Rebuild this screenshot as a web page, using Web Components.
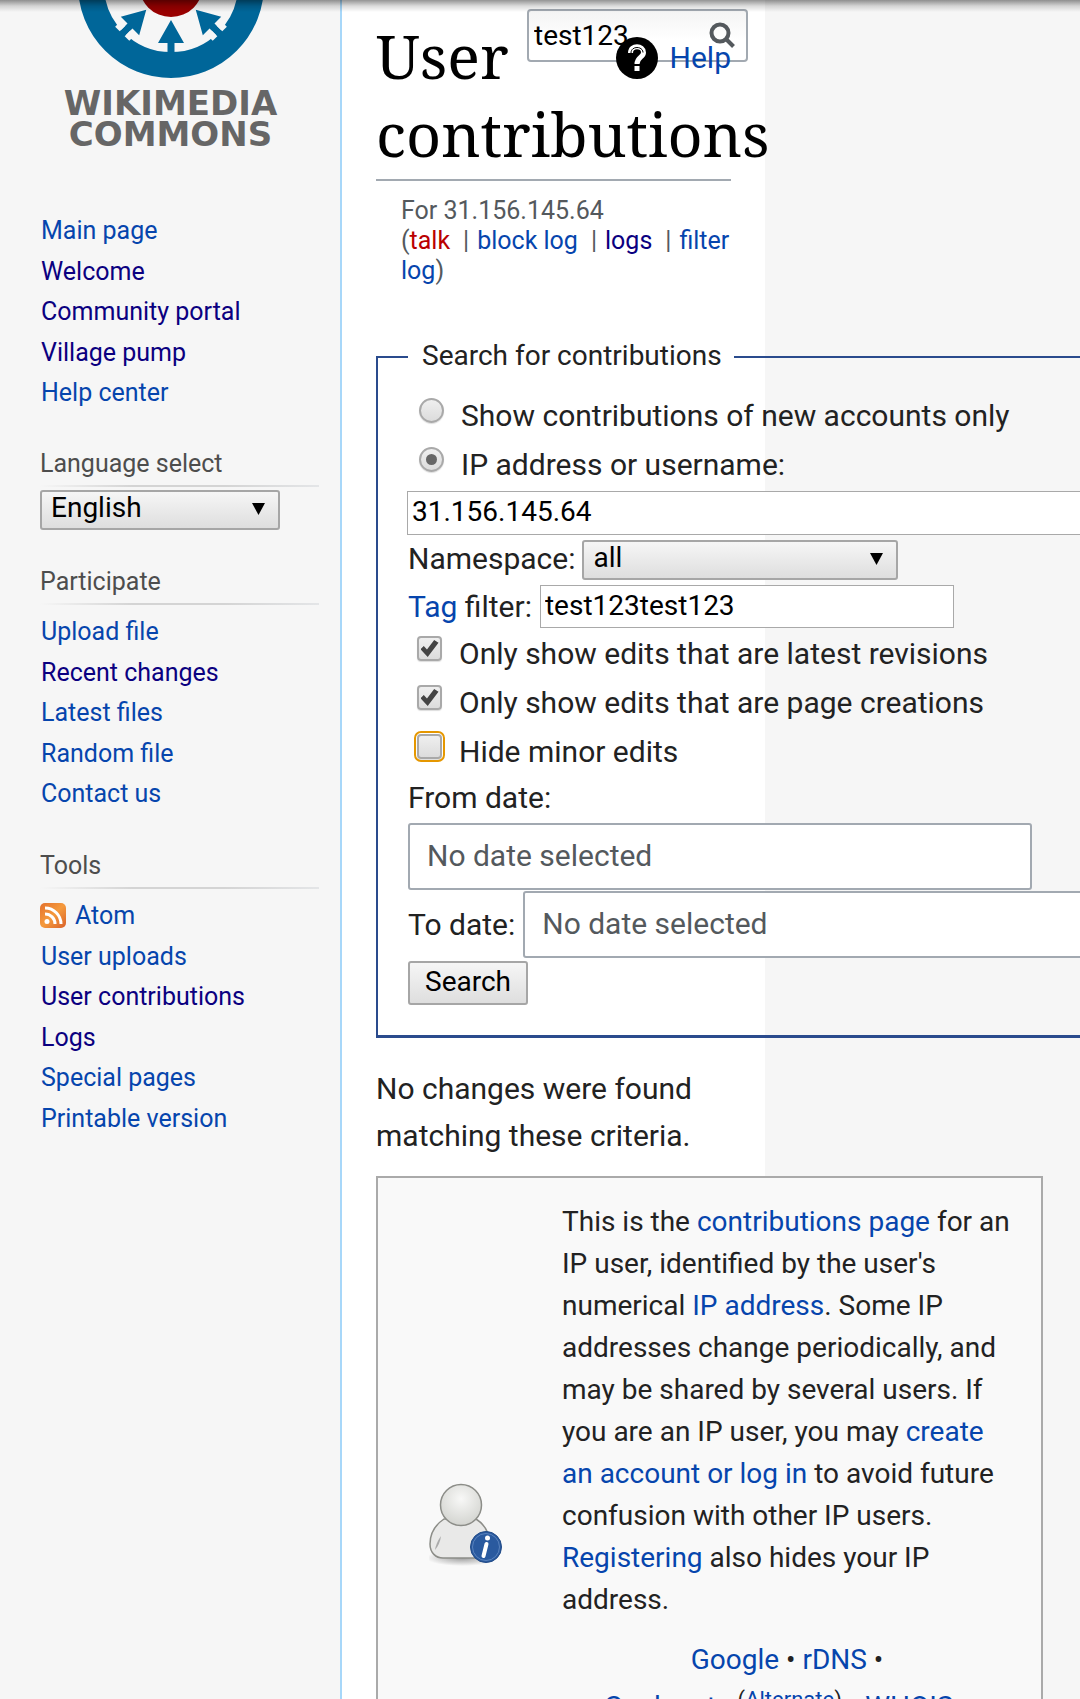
<!DOCTYPE html>
<html lang="en">
<head>
<meta charset="utf-8">
<meta name="viewport" content="width=device-width">
<title>User contributions - Wikimedia Commons</title>
<style>
  body { margin: 0; background: #f6f6f6; color: #222; font-family: Roboto, "Liberation Sans", sans-serif; font-size: 30px; }
</style>
</head>
<body>
<commons-page></commons-page>

<script>
const LINKS = `
  a { color: #0645ad; text-decoration: none; }
  a:hover { text-decoration: underline; }
  a.visited { color: #0b0080; }
  a.new { color: #ba0000; }
`;

function define(name, html) {
  const template = document.createElement('template');
  template.innerHTML = html;
  customElements.define(name, class extends HTMLElement {
    constructor() {
      super();
      this.attachShadow({ mode: 'open' }).append(template.content.cloneNode(true));
    }
  });
}

define('commons-logo', `
  <style>
    :host { display: block; color: #666; }
    a { display: flex; flex-direction: column; align-items: center; color: inherit; text-decoration: none;
        font: 700 34px/31px "DejaVu Sans", sans-serif; }
    svg { display: block; margin-bottom: 10px; }
  </style>
  <a href="#" aria-label="Wikimedia Commons">
    <svg width="190" height="78" viewBox="-95 15 190 78" aria-hidden="true">
      <circle r="80" fill="none" stroke="#006699" stroke-width="26"/>
      <circle r="32" fill="#990000"/>
      <g fill="#006699">
        <path d="M0 35L13 58H3.500V70H-3.500V58H-13Z"/>
        <path transform="rotate(45)" d="M0 35L13 58H3.500V70H-3.500V58H-13Z"/>
        <path transform="rotate(-45)" d="M0 35L13 58H3.500V70H-3.500V58H-13Z"/>
      </g>
      <path transform="rotate(45)" d="M-10 61H-3.500V69H-10ZM3.500 61H10V69H3.500Z" fill="#f6f6f6"/>
      <path transform="rotate(-45)" d="M-10 61H-3.500V69H-10ZM3.500 61H10V69H3.500Z" fill="#f6f6f6"/>
    </svg>
    <span>WIKIMEDIA</span>
    <span>COMMONS</span>
  </a>
`);

define('nav-portal', `
  <style>
    :host { display: block; margin-top: 35px; }
    h3 { margin: 0; padding-bottom: 6px; font-size: 25px; line-height: 30px; font-weight: 400; color: #4d4d4d; }
    .rule { height: 2px; background: linear-gradient(to right, rgba(200,204,209,0), #d4d4d4 33%, #d4d4d4 66%, rgba(200,204,209,.4)); }
  </style>
  <h3><slot name="heading"></slot></h3>
  <div class="rule"></div>
  <slot></slot>
`);

/* A native select with its own arrow; the label is drawn unless it is marked quiet. */
customElements.define('drop-down', class extends HTMLElement {
  constructor() {
    super();
    this.attachShadow({ mode: 'open' }).innerHTML = `
      <style>
        :host { display: flex; align-items: center; gap: 7px; }
        :host([quiet]) label { display: none; }
        label { padding-bottom: 4px; }
        .box { display: grid; flex: 0 0 var(--select-width, 240px); align-items: center; }
        .box > * { grid-area: 1 / 1; }
        select { appearance: none; width: 100%; height: 40px; margin: 0; padding: 0 40px 4px 9px; box-sizing: border-box;
          border: 2px solid #a6a6a6; border-radius: 3px; background: linear-gradient(#f6f6f6, #dedede); color: #000;
          font: inherit; font-size: 28px; line-height: 32px; }
        svg { justify-self: end; margin: 0 14px 3px 0; pointer-events: none; }
      </style>
      <label for="field"></label>
      <span class="box">
        <select id="field"><option></option></select>
        <svg width="14" height="14" viewBox="0 0 14 14" aria-hidden="true"><path d="M0 1H13L6.500 13Z"/></svg>
      </span>`;
    const label = this.getAttribute('label');
    this.shadowRoot.querySelector('label').textContent = label;
    this.shadowRoot.querySelector('select').setAttribute('aria-label', label);
    this.shadowRoot.querySelector('option').textContent = this.getAttribute('value');
  }
});

define('site-sidebar', `
  <style>
    ${LINKS}
    :host { display: block; padding: 0 21px 0 40px; font-size: 25px; }
    commons-logo { margin: 0 -20px 0 -38px; padding-bottom: 61px; }
    ul { list-style: none; margin: 0; padding: 7px 0 2px 1px; }
    ul.first { padding-top: 0; padding-bottom: 1px; }
    li { line-height: 40px; }
    li:nth-child(even) { line-height: 41px; }
    .feed { display: flex; align-items: center; gap: 9px; margin-left: -1px; }
    drop-down { margin: 3px 0 37px; }
  </style>
  <commons-logo></commons-logo>
  <ul class="first">
    <li><a href="#">Main page</a></li>
    <li><a class="visited" href="#">Welcome</a></li>
    <li><a class="visited" href="#">Community portal</a></li>
    <li><a class="visited" href="#">Village pump</a></li>
    <li><a href="#">Help center</a></li>
  </ul>
  <nav-portal>
    <span slot="heading">Language select</span>
    <drop-down quiet label="Language select" value="English"></drop-down>
  </nav-portal>
  <nav-portal>
    <span slot="heading">Participate</span>
    <ul>
      <li><a href="#">Upload file</a></li>
      <li><a class="visited" href="#">Recent changes</a></li>
      <li><a href="#">Latest files</a></li>
      <li><a href="#">Random file</a></li>
      <li><a href="#">Contact us</a></li>
    </ul>
  </nav-portal>
  <nav-portal>
    <span slot="heading">Tools</span>
    <ul>
      <li class="feed">
        <svg width="26" height="26" viewBox="0 0 26 26" aria-hidden="true">
          <defs><linearGradient id="feed" x1="0" y1="0" x2="1" y2="1">
            <stop offset="0" stop-color="#e3702d"/><stop offset=".5" stop-color="#f59a3c"/><stop offset="1" stop-color="#d9612a"/>
          </linearGradient></defs>
          <rect width="26" height="25" rx="5" fill="url(#feed)"/>
          <circle cx="7" cy="18.500" r="2.500" fill="#fff"/>
          <path d="M5 11A10 10 0 0 1 15 21M5 5A16 16 0 0 1 21 21" fill="none" stroke="#fff" stroke-width="3"/>
        </svg>
        <a href="#">Atom</a>
      </li>
      <li><a href="#">User uploads</a></li>
      <li><a class="visited" href="#">User contributions</a></li>
      <li><a class="visited" href="#">Logs</a></li>
      <li><a href="#">Special pages</a></li>
      <li><a href="#">Printable version</a></li>
    </ul>
  </nav-portal>
`);

define('site-search', `
  <style>
    :host { display: block; }
    form { display: grid; align-items: center; margin: 0; }
    form > * { grid-area: 1 / 1; }
    input { width: 100%; height: 53px; box-sizing: border-box; margin: 0; padding: 0 48px 1px 5px; border: 2px solid #a2a9b1; border-radius: 4px;
      background: linear-gradient(#f4f4f4, #fff 60%); color: #000; font: inherit; font-size: 28px; }
    button { justify-self: end; margin: 0 12px 1px 0; padding: 0; border: 0; background: none; line-height: 0; }
  </style>
  <form>
    <input type="text" value="test123" aria-label="Search Wikimedia Commons">
    <button type="button" aria-label="Go">
      <svg width="27" height="27" viewBox="0 0 27 27" fill="none" stroke="#54595d" aria-hidden="true">
        <circle cx="11" cy="11" r="8.500" stroke-width="4"/><path d="M17 17L24.500 24.500" stroke-width="4"/>
      </svg>
    </button>
  </form>
`);

define('help-link', `
  <style>
    ${LINKS}
    :host { display: block; line-height: 42px; }
    a { display: flex; align-items: center; gap: 12px; }
  </style>
  <a href="#">
    <svg width="42" height="42" viewBox="0 0 42 42" aria-hidden="true">
      <circle cx="21" cy="21" r="21"/>
      <path d="M14.500 16C14.500 7.500 27.500 8 27.500 15.500C27.500 20.500 21 20 21 27" fill="none" stroke="#fff" stroke-width="5"/>
      <path d="M15 16C15 8.500 27 9 27 15.500" fill="none" stroke="#000" stroke-width="1"/>
      <rect x="18.500" y="29" width="5" height="5" fill="#fff"/>
    </svg>
    <span>Help</span>
  </a>
`);

define('contributions-form', `
  <style>
    ${LINKS}
    :host { display: block; }
    form { margin: 0; }
    label { white-space: nowrap; }
    fieldset { margin: 0; min-width: 0; padding: 10px 30px 30px; border: 2px solid #2a4b8d; border-bottom-width: 3px; width: 760px; box-sizing: border-box; }
    legend { padding: 0 12px 3px 14px; line-height: 45px; font-size: 28px; }
    .choice { display: flex; align-items: center; gap: 17px; height: 49px; padding-left: 11px; }
    .choice.tick { padding-left: 9px; }
    .choice input { appearance: none; flex: none; width: 25px; height: 25px; margin: 0 0 10px; box-sizing: border-box; border: 2px solid #a9a9a9;
      background: linear-gradient(#efefef, #dcdcdc); box-shadow: 0 1px 1px #ddd; display: grid; place-items: center; }
    input[type=radio] { border-radius: 50%; }
    input[type=checkbox] { border-radius: 4px; }
    input[type=radio]:checked::before { content: ""; width: 11px; height: 11px; border-radius: 50%; background: #666; }
    input[type=checkbox]:checked::before { content: ""; width: 18px; height: 17px; background: #444;
      clip-path: polygon(0 55%, 18% 36%, 36% 56%, 76% 0, 100% 16%, 40% 100%); }
    .choice input.focused { outline: 2px solid #e59700; outline-offset: 1px; }
    .text { box-sizing: border-box; margin: 0; padding: 0 4px 3px; border: 1px solid #a9a9a9; background: #fff; color: #000; font: inherit; font-size: 28px; }
    .user { display: block; width: 700px; height: 44px; margin: 2px 0 5px -1px; }
    .row { display: flex; align-items: center; }
    drop-down { --select-width: 316px; }
    .tags { gap: 8px; margin: 5px 0 1px; }
    .tags .text { flex: 0 0 414px; height: 43px; }
    .from { display: block; line-height: 47px; margin: -2px 0 2px; }
    .date { box-sizing: border-box; width: 624px; flex: none; height: 67px; margin: 0; padding: 0 17px 3px; border: 2px solid #a2a9b1; border-radius: 3px;
      background: #fff; font: inherit; display: block; }
    .date::placeholder { color: #54595d; opacity: 1; }
    .to { gap: 8px; margin: 1px 0 3px; }
    button { display: block; height: 44px; margin: 0; padding: 0 15px 3px; border: 2px solid #a6a6a6; border-radius: 3px;
      background: linear-gradient(#f6f6f6, #dedede); color: #000; font: inherit; font-size: 28px; line-height: 36px; }
  </style>
  <form>
    <fieldset>
      <legend>Search for contributions</legend>
      <div class="choice"><input type="radio" name="who" id="new"><label for="new">Show contributions of new accounts only</label></div>
      <div class="choice"><input type="radio" name="who" id="ip" checked><label for="ip">IP address or username:</label></div>
      <input class="text user" type="text" value="31.156.145.64" aria-label="IP address or username">
      <drop-down label="Namespace:" value="all"></drop-down>
      <div class="row tags"><label for="tag"><a href="#">Tag</a> filter:</label><input class="text" type="text" id="tag" value="test123test123"></div>
      <div class="choice tick"><input type="checkbox" id="latest" checked><label for="latest">Only show edits that are latest revisions</label></div>
      <div class="choice tick"><input type="checkbox" id="created" checked><label for="created">Only show edits that are page creations</label></div>
      <div class="choice tick"><input class="focused" type="checkbox" id="minor"><label for="minor">Hide minor edits</label></div>
      <label class="from" for="from">From date:</label>
      <input class="date" type="text" id="from" placeholder="No date selected">
      <div class="row to"><label for="to">To date:</label><input class="date" type="text" id="to" placeholder="No date selected"></div>
      <button type="button">Search</button>
    </fieldset>
  </form>
`);

define('ip-notice', `
  <style>
    ${LINKS}
    :host { display: grid; grid-template-columns: 132px 450px; column-gap: 23px; width: 667px; min-height: 696px; box-sizing: border-box;
      padding: 23px 29px 21px; border: 2px solid #aaa; background: #f9f9f9; font-size: 28px; line-height: 42px; }
    .icon { align-self: center; justify-self: start; margin-left: 22px; line-height: 0; }
    p { margin: 0; }
    .tools { margin-top: 18px; text-align: center; }
    sup { font-size: 22px; line-height: 38px; vertical-align: 9px; }
  </style>
  <div class="icon">
    <svg width="74" height="84" viewBox="0 0 74 84" aria-hidden="true">
      <defs>
        <radialGradient id="head" cx=".5" cy=".35" r=".6"><stop offset="0" stop-color="#f8f8f7"/><stop offset="1" stop-color="#d6d7d3"/></radialGradient>
        <radialGradient id="shade"><stop offset="0" stop-color="#777" stop-opacity=".7"/><stop offset="1" stop-color="#777" stop-opacity="0"/></radialGradient>
      </defs>
      <ellipse cx="33" cy="75" rx="36" ry="8" fill="url(#shade)"/>
      <path d="M15 36C6 42 1 50 1 61C1 70 7 75 14 75H50C59 75 62 68 61 60C60 48 55 41 47 36Z" fill="#e9e9e8" stroke="#8c8d88" stroke-width="1.500"/>
      <path d="M6 67Q7 60 12 53Q11 61 6 67Z" fill="#aaa"/>
      <circle cx="32" cy="22" r="20.500" fill="url(#head)" stroke="#8c8d88" stroke-width="1.500"/>
      <circle cx="57" cy="64" r="15.500" fill="#2a5a9f" stroke="#204a87" stroke-width="1"/>
      <circle cx="57" cy="64" r="13.500" fill="none" stroke="#5a83bd" stroke-width="1"/>
      <circle cx="58.500" cy="55" r="2.500" fill="#fff"/>
      <path d="M57.500 61L54.500 73" stroke="#fff" stroke-width="4" stroke-linecap="round"/>
    </svg>
  </div>
  <div>
    <p>This is the <a href="#">contributions page</a> for an IP user, identified by the user's numerical <a href="#">IP address</a>. Some IP addresses change periodically, and may be shared by several users. If you are an IP user, you may <a href="#">create an account or log in</a> to avoid future confusion with other IP users. <a href="#">Registering</a> also hides your IP address.</p>
    <p class="tools"><a href="#">Google</a> • <a href="#">rDNS</a> •<br><a href="#">Geolocate</a> <sup>(<a href="#">Alternate</a>)</sup> • <a href="#">WHOIS</a> •</p>
  </div>
`);

define('commons-page', `
  <style>
    ${LINKS}
    :host { display: grid; grid-template-columns: 340px minmax(0, 1fr) 315px; position: relative; height: 100vh; overflow: hidden; }
    .edge { position: absolute; inset: 0 0 auto; height: 12px; background: linear-gradient(rgba(0,0,0,.42), rgba(0,0,0,.14) 50%, rgba(0,0,0,0)); }
    main { position: relative; border-left: 2px solid #a7d7f9; background: #fff; padding: 17px 34px 0; }
    h1 { margin: 0; padding-bottom: 6px; border-bottom: 2px solid #a2a9b1; color: #000; font: 400 61px/78px "Noto Serif", "DejaVu Serif Condensed", "DejaVu Serif", serif; }
    site-search { position: absolute; top: 9px; right: 17px; width: 221px; }
    help-link { position: absolute; top: 37px; right: 34px; }
    .sub { margin: 15px 0 47px 25px; font-size: 25px; line-height: 30px; color: #54595d; white-space: nowrap; }
    .sub i { font-style: normal; padding: 0 8px 0 13px; }
    .empty { margin: 27px 0 17px; line-height: 47px; }
  </style>
  <site-sidebar></site-sidebar>
  <main>
    <h1>User contributions</h1>
    <site-search></site-search>
    <help-link></help-link>
    <div class="sub">For 31.156.145.64<br>(<a class="new" href="#">talk</a><i>|</i><a href="#">block log</a><i>|</i><a class="visited" href="#">logs</a><i>|</i><a href="#">filter<br>log</a>)</div>
    <contributions-form></contributions-form>
    <p class="empty">No changes were found matching these criteria.</p>
    <ip-notice></ip-notice>
  </main>
  <div class="edge"></div>
`);
</script>
</body>
</html>
